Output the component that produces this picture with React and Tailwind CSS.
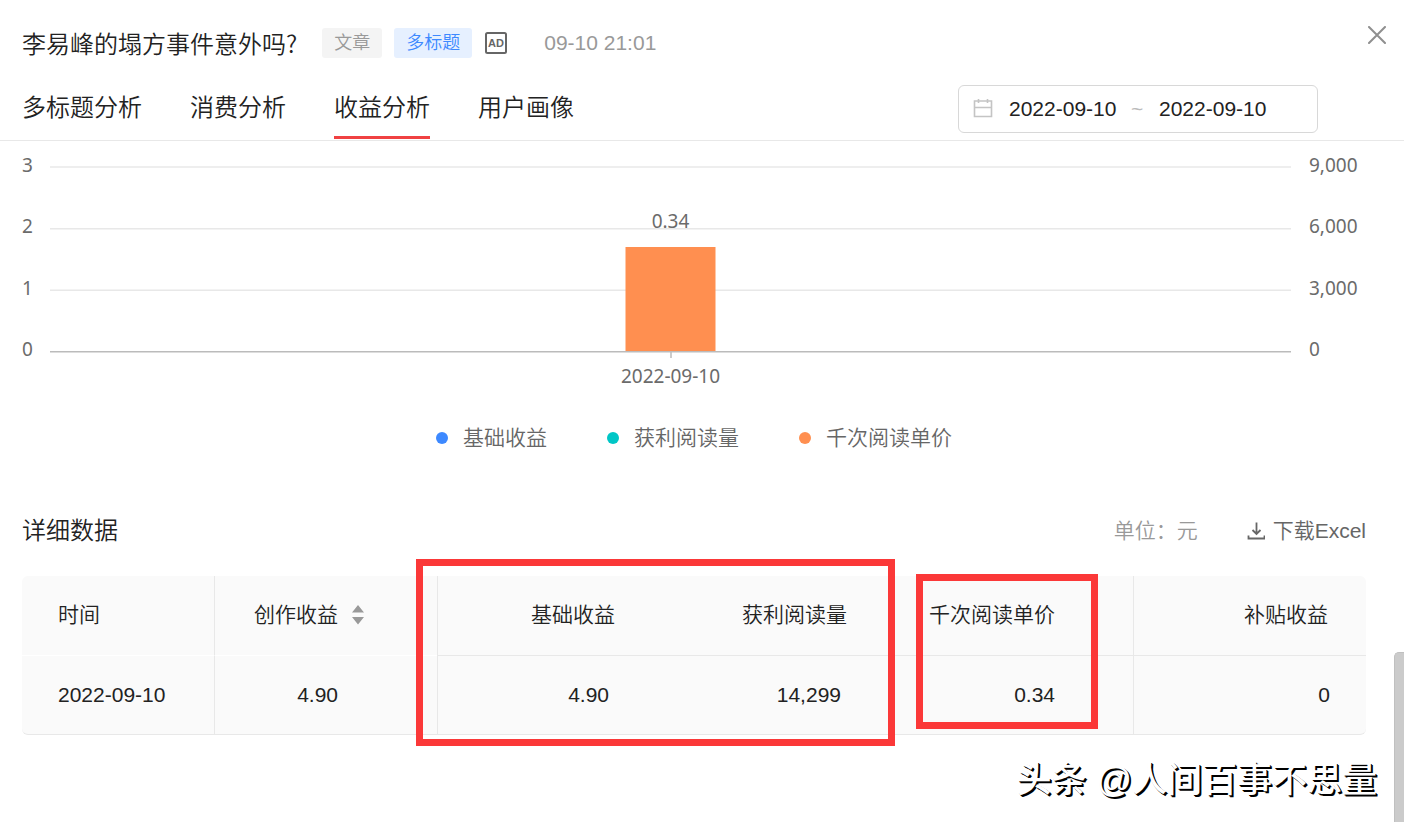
const TABS = ['多标题分析', '消费分析', '收益分析', '用户画像'];

const LEGEND = [
  { label: '基础收益', dot: 'bg-[#3d89ff]' },
  { label: '获利阅读量', dot: 'bg-[#00c6c6]' },
  { label: '千次阅读单价', dot: 'bg-[#ff8f50]' },
];

const TICKS = [
  { y: 26, left: '3', right: '9,000' },
  { y: 87, left: '2', right: '6,000' },
  { y: 149, left: '1', right: '3,000' },
  { y: 210, left: '0', right: '0' },
];

const AXIS_TEXT = "fill-[#6b6b6b] text-[19px] font-normal font-['Noto_Sans']";

function Header() {
  return (
    <header className="border-b border-[#e8e8e8] pl-[22px]">
      <div className="flex h-[85px] items-start justify-between pr-[18px]">
        <div className="flex items-center pt-7">
          <h1 className="mr-[25px] font-['Noto_Sans_CJK_SC',sans-serif] text-[24px] leading-[30px]">李易峰的塌方事件意外吗?</h1>
          <span className="mr-3 rounded-[3px] bg-[#f4f4f4] px-3 text-[18px] leading-[30px] text-[#999]">文章</span>
          <span className="mr-3 rounded-[3px] bg-[#e6f0ff] px-3 text-[18px] leading-[30px] text-[#3d89ff]">多标题</span>
          <svg className="mr-9 size-6" viewBox="0 0 24 24" fill="none" aria-label="AD">
            <rect x="2" y="2" width="20" height="20" rx="1.5" stroke="#666" strokeWidth="2" />
            <text x="12" y="16" textAnchor="middle" className="fill-[#666] text-[11px] font-bold">AD</text>
          </svg>
          <time className="text-[21px] leading-[30px] text-[#999]">09-10 21:01</time>
        </div>
        <button type="button" aria-label="关闭" className="mt-[26px]">
          <svg className="size-[18px]" viewBox="0 0 18 18" fill="none" stroke="#8f8f8f" strokeWidth="2">
            <path d="M1 1L17 17M17 1L1 17" strokeLinecap="round" />
          </svg>
        </button>
      </div>
      <div className="flex h-[55px] items-start justify-between pr-[86px]">
        <nav className="flex gap-12">
          {TABS.map((tab) => (
            <a
              key={tab}
              href="#"
              className={
                tab === '收益分析'
                  ? 'h-[54px] border-b-[3px] border-[#f04142] text-[24px] leading-[46px]'
                  : 'h-[54px] text-[24px] leading-[46px]'
              }
            >
              {tab}
            </a>
          ))}
        </nav>
        <div className="flex h-12 w-[360px] items-center rounded-md border border-[#d8d8d8] pl-[14px] text-[21px]">
          <svg className="mr-[16px] size-5" viewBox="0 0 20 20" fill="none" stroke="#c4c4c4" strokeWidth="1.6">
            <path d="M1.5 2H18.5V17.5H1.5ZM1.5 8.5H18.5M5.5 0V4M14.5 0V4" />
          </svg>
          <input aria-label="开始日期" defaultValue="2022-09-10" className="w-[110px] outline-none" />
          <span className="w-10 pl-3 text-[#bbb]">~</span>
          <input aria-label="结束日期" defaultValue="2022-09-10" className="w-[110px] outline-none" />
        </div>
      </div>
    </header>
  );
}

function Chart() {
  return (
    <section>
      <div className="flex">
        <svg className="h-[260px] w-7 shrink-0">
          {TICKS.map((t) => (
            <text key={t.y} x="0" y={t.y + 5} className={AXIS_TEXT}>{t.left}</text>
          ))}
        </svg>
        <svg className="h-[260px] min-w-0 flex-1">
          <g stroke="#e8e8e8" strokeWidth="1.5">
            <line x1="0" x2="100%" y1="26" y2="26" />
            <line x1="0" x2="100%" y1="87.7" y2="87.7" />
            <line x1="0" x2="100%" y1="149.2" y2="149.2" />
          </g>
          <svg x="50%" className="overflow-visible">
            <rect x="-45" y="106" width="90" height="104" fill="#ff8f50" />
            <line x1="0.5" x2="0.5" y1="211" y2="217" stroke="#bbb" strokeWidth="1.5" />
            <text x="0" y="87" textAnchor="middle" className={AXIS_TEXT}>0.34</text>
            <text x="0" y="242" textAnchor="middle" className={AXIS_TEXT}>2022-09-10</text>
          </svg>
          <line x1="0" x2="100%" y1="210.7" y2="210.7" stroke="#bbb" strokeWidth="1.5" />
        </svg>
        <svg className="h-[260px] w-[75px] shrink-0">
          {TICKS.map((t) => (
            <text key={t.y} x="18" y={t.y + 5} className={AXIS_TEXT}>{t.right}</text>
          ))}
        </svg>
      </div>
      <ul className="mt-[22px] flex justify-center gap-[60px] text-[21px] leading-[30px] text-[#666]">
        {LEGEND.map((item) => (
          <li key={item.label} className="flex items-center gap-[15px]">
            <span className={`size-3 rounded-full ${item.dot}`} />
            {item.label}
          </li>
        ))}
      </ul>
    </section>
  );
}

function DataTable() {
  return (
    <div className="relative mt-7">
      <div className="overflow-hidden rounded-md border-b border-[#e8e8e8] bg-[#fafafa]">
        <table className="w-full table-fixed border-separate border-spacing-0 text-right text-[21px] leading-[30px]">
          <colgroup>
            <col className="w-[193px]" />
            <col className="w-[222px]" />
            <col className="w-[216px]" />
            <col className="w-[232px]" />
            <col className="w-[249px]" />
            <col className="w-[232px]" />
          </colgroup>
          <thead>
            <tr className="h-20 *:border-b *:pb-0.5 *:font-[350]">
              <th className="border-r border-r-[#e8e8e8] border-b-white pl-9 text-left">时间</th>
              <th className="border-b-white pr-[72px]">
                <button type="button" className="inline-flex items-center gap-[13px]">
                  创作收益
                  <svg className="h-5 w-[14px]" viewBox="0 0 14 20" fill="#999">
                    <path d="M1 7.5L7 0L13 7.5ZM1 12H13L7 19.5Z" />
                  </svg>
                </button>
              </th>
              <th className="border-l border-[#e8e8e8] pr-[38px]">基础收益</th>
              <th className="border-[#e8e8e8] pr-[38px]">获利阅读量</th>
              <th className="border-r border-[#e8e8e8] pr-[78px]">千次阅读单价</th>
              <th className="border-[#e8e8e8] pr-[38px]">补贴收益</th>
            </tr>
          </thead>
          <tbody>
            <tr className="h-[78px] *:border-[#e8e8e8]">
              <td className="border-r pl-9 text-left">2022-09-10</td>
              <td className="pr-[99px]">4.90</td>
              <td className="border-l pr-11">4.90</td>
              <td className="pr-11">14,299</td>
              <td className="border-r pr-[78px]">0.34</td>
              <td className="pr-9">0</td>
            </tr>
          </tbody>
        </table>
      </div>
      <div className="pointer-events-none absolute -top-[17px] left-[394px] h-[187px] w-[479px] border-7 border-[#fb3838]" />
      <div className="pointer-events-none absolute -top-[2px] left-[894px] h-[155px] w-[182px] border-7 border-[#fb3838]" />
    </div>
  );
}

export default function App() {
  return (
    <div className="relative min-h-screen bg-white font-['Liberation_Sans','Noto_Sans_CJK_SC',sans-serif] font-[350] text-[#222]">
      <Header />
      <main className="pr-[38px] pl-[22px]">
        <Chart />
        <section className="mt-[61px]">
          <div className="flex items-center text-[21px] leading-[34px]">
            <h2 className="mr-auto text-[24px]">详细数据</h2>
            <span className="mr-[49px] text-[#999]">单位：元</span>
            <button type="button" className="flex items-center gap-2 text-[#666]">
              <svg className="size-[18px]" viewBox="0 0 18 18" fill="none" stroke="#666" strokeWidth="1.8">
                <path d="M9.5 0.5V12M5.5 8L9.5 12L13.5 8M1.5 13.5V16.5H17.5V13.5" />
              </svg>
              下载Excel
            </button>
          </div>
          <DataTable />
        </section>
      </main>
      <p className="mt-5 flex justify-end gap-[10px] pr-[27px] text-[35px] leading-[50px] font-medium text-white [text-shadow:2px_2px_0_#000,1px_1px_0_#000]">
        <span>头条</span>
        <span>@人间百事不思量</span>
      </p>
      <div className="absolute right-0 bottom-0 h-[170px] w-[10px] rounded-tl-[5px] border-t border-l border-[#c0c0c0] bg-[#cbcbcb]" />
    </div>
  );
}
